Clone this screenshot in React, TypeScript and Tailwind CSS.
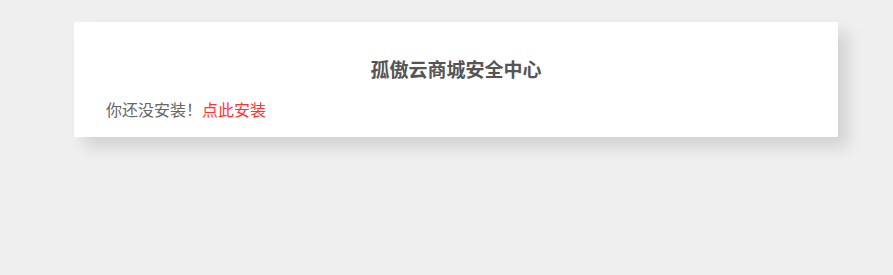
export default function App() {
  return (
    <div
      className="min-h-[275px] w-full bg-[#efefef] pt-[22px]"
      style={{ fontFamily: '"Liberation Sans", "Noto Sans CJK SC", sans-serif' }}
    >
      <div className="ml-[74px] w-[764px] bg-white px-8 pt-[37px] pb-[14px] shadow-[10px_10px_15px_rgba(0,0,0,0.12)]">
        <h1 className="text-center text-[19px] leading-[24px] font-bold text-[#555]">孤傲云商城安全中心</h1>
        <p className="mt-4 text-[16px] leading-[24px] text-[#666]">
          你还没安装！<a href="#" className="text-[#f33]">点此安装</a>
        </p>
      </div>
    </div>
  );
}
